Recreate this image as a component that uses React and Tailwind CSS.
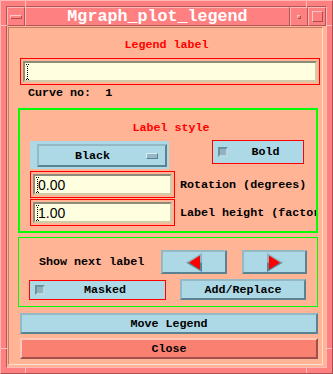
import React from 'react';

const mono = "font-['Liberation_Mono',monospace] font-bold text-[11.7px] leading-[14px]";
const blueBevel = "bg-[#add8e6] border-2 border-t-[#94b8c4] border-l-[#94b8c4] border-b-[#5b8290] border-r-[#5b8290]";

function Cursor() {
  const dots = [];
  for (let y = 2; y < 15; y += 2) dots.push(<rect key={y} x="2" y={y} width="1" height="1" />);
  return (
    <svg width="5" height="16" viewBox="0 0 5 16" className="shrink-0">
      <g fill="#000">
        <rect x="1" y="0" width="1" height="1" />
        <rect x="3" y="0" width="1" height="1" />
        {dots}
        <rect x="1" y="15" width="1" height="1" />
        <rect x="3" y="15" width="1" height="1" />
      </g>
    </svg>
  );
}

function Field({ className, value }) {
  return (
    <div className={`border border-[#ff0000] p-[2px] ${className}`}>
      <div className="h-full flex items-center bg-[#ffffe0] border-2 border-t-[#8b8b78] border-l-[#8b8b78] border-b-[#d2cbaa] border-r-[#d2cbaa]">
        <Cursor />
        <span className="-ml-[2px] font-['Liberation_Sans',sans-serif] text-[14px] leading-[16px] text-black">{value}</span>
      </div>
    </div>
  );
}

function Indicator() {
  return (
    <div className="w-[10px] h-[10px] shrink-0 bg-[#8fb3bf] border-2 border-t-[#6d929e] border-l-[#6d929e] border-b-[#b9d8e2] border-r-[#b9d8e2]" />
  );
}

function Toggle({ className, label }) {
  return (
    <div className={`flex items-center border border-[#ff0000] bg-[#add8e6] pl-[5px] ${className}`}>
      <Indicator />
      <span className={`flex-1 text-center text-black ${mono}`}>{label}</span>
    </div>
  );
}

function ArrowLeft() {
  return (
    <svg width="16" height="19" viewBox="0 0 16 19">
      <polygon points="0,9.5 16,0 16,9.5" fill="#8fb2be" />
      <polygon points="0,9.5 16,9.5 16,19" fill="#5b8290" />
      <polygon points="3,9.5 14,2.5 14,16.5" fill="#ff0000" />
    </svg>
  );
}

function ArrowRight() {
  return (
    <svg width="16" height="19" viewBox="0 0 16 19">
      <polygon points="16,9.5 0,0 0,9.5" fill="#8fb2be" />
      <polygon points="16,9.5 0,9.5 0,19" fill="#5b8290" />
      <polygon points="13,9.5 2,2.5 2,16.5" fill="#ff0000" />
    </svg>
  );
}

const titlePart = "h-full border border-t-[#ffb8b8] border-l-[#ffb8b8] border-b-[#b05858] border-r-[#b05858] flex items-center justify-center";

export default function App() {
  return (
    <div className="relative w-[333px] h-[374px] bg-[#ff8080] border border-t-[#ffb8b8] border-l-[#ffb8b8] border-b-[#a85050] border-r-[#a85050] p-[5px]">
      <div className="h-full flex flex-col border border-t-[#b05858] border-l-[#b05858] border-b-[#ffb8b8] border-r-[#ffb8b8]">
        {/* title bar */}
        <div className="h-[19px] flex shrink-0">
          <div className={`w-[18px] ${titlePart}`}>
            <div className="w-[12px] h-[4px] border border-t-[#ffc8c8] border-l-[#ffc8c8] border-b-[#a85050] border-r-[#a85050]" />
          </div>
          <div className={`flex-1 ${titlePart}`}>
            <span className="font-['Liberation_Mono',monospace] font-bold text-[16.7px] leading-[18px] text-white">Mgraph_plot_legend</span>
          </div>
          <div className={`w-[18px] ${titlePart}`}>
            <div className="w-[4px] h-[4px] border border-t-[#ffc8c8] border-l-[#ffc8c8] border-b-[#a85050] border-r-[#a85050]" />
          </div>
          <div className={`w-[18px] ${titlePart}`}>
            <div className="w-[11px] h-[11px] border border-t-[#ffc8c8] border-l-[#ffc8c8] border-b-[#a85050] border-r-[#a85050]" />
          </div>
        </div>

        {/* content */}
        <div className="flex-1 bg-[#ffb496] flex">
          <div className="flex-1 ml-[1px] mt-[1px] mr-[3px] mb-[2px] border border-t-[#c87c64] border-l-[#c87c64] border-b-[#ffe0d0] border-r-[#ffe0d0] flex flex-col">
            <div className={`mt-[10px] text-center pl-[2px] text-[#ff0000] ${mono}`}>Legend label</div>
            <Field className="mt-[6px] ml-[11px] w-[300px] h-[27px]" value="" />
            <div className={`mt-[1px] ml-[19px] whitespace-pre text-black ${mono}`}>Curve no:  1</div>

            {/* label style group */}
            <div className="mt-[8px] ml-[9px] w-[300px] h-[125px] border-2 border-[#00ff00] overflow-hidden flex flex-col">
              <div className={`mt-[11px] text-center pl-[6px] text-[#ff0000] ${mono}`}>Label style</div>
              <div className="mt-[5px] ml-[10px] flex items-start">
                <div className="mt-[1px] w-[139px] h-[28px] bg-[#add8e6] pl-[7px] pt-[3px] pr-[2px] pb-[2px]">
                  <div className={`h-full flex items-center ${blueBevel}`}>
                    <span className={`flex-1 text-center text-black ${mono}`}>Black</span>
                    <div className="mr-[7px] w-[12px] h-[6px] bg-[#94b8c4] border border-t-[#d4eef5] border-l-[#d4eef5] border-b-[#5b8290] border-r-[#5b8290]" />
                  </div>
                </div>
                <Toggle className="ml-[43px] w-[92px] h-[24px]" label="Bold" />
              </div>
              <div className="mt-[2px] ml-[10px] flex items-center">
                <Field className="w-[145px] h-[27px] shrink-0" value="0.00" />
                <span className={`ml-[5px] whitespace-nowrap text-black ${mono}`}>Rotation (degrees)</span>
              </div>
              <div className="mt-[1px] ml-[10px] flex items-center">
                <Field className="w-[145px] h-[27px] shrink-0" value="1.00" />
                <span className={`ml-[5px] whitespace-nowrap text-black ${mono}`}>Label height (factor)</span>
              </div>
            </div>

            {/* next label group */}
            <div className="mt-[4px] ml-[9px] w-[300px] h-[70px] border border-[#00ff00] flex flex-col">
              <div className="mt-[12px] flex items-center">
                <span className={`ml-[20px] w-[122px] text-black ${mono}`}>Show next label</span>
                <div className={`w-[66px] h-[24px] flex items-center justify-center ${blueBevel}`}>
                  <ArrowLeft />
                </div>
                <div className={`ml-[15px] w-[65px] h-[24px] flex items-center justify-center ${blueBevel}`}>
                  <ArrowRight />
                </div>
              </div>
              <div className="mt-[5px] flex items-start">
                <Toggle className="mt-[1px] ml-[10px] w-[137px] h-[20px]" label="Masked" />
                <div className={`ml-[14px] w-[126px] h-[21px] flex items-center justify-center ${blueBevel}`}>
                  <span className={`text-black ${mono}`}>Add/Replace</span>
                </div>
              </div>
            </div>

            <div className={`mt-[6px] ml-[11px] w-[298px] h-[21px] flex items-center justify-center ${blueBevel}`}>
              <span className={`text-black ${mono}`}>Move Legend</span>
            </div>
            <div className="mt-[4px] ml-[11px] w-[298px] h-[21px] flex items-center justify-center bg-[#fa8072] border-2 border-t-[#ffc8b8] border-l-[#ffc8b8] border-b-[#a0504a] border-r-[#a0504a]">
              <span className={`text-black ${mono}`}>Close</span>
            </div>
          </div>
        </div>
      </div>

      {/* frame corner notches */}
      <div className="absolute left-[24px] top-0 w-[1px] h-[6px] bg-[#ffc0c0]" />
      <div className="absolute left-[305px] top-0 w-[1px] h-[6px] bg-[#ffc0c0]" />
      <div className="absolute left-0 top-[24px] w-[6px] h-[1px] bg-[#ffc0c0]" />
      <div className="absolute right-0 top-[24px] w-[6px] h-[1px] bg-[#ffc0c0]" />
      <div className="absolute left-[24px] bottom-0 w-[1px] h-[6px] bg-[#ffc0c0]" />
      <div className="absolute left-[305px] bottom-0 w-[1px] h-[6px] bg-[#ffc0c0]" />
      <div className="absolute left-0 bottom-[24px] w-[6px] h-[1px] bg-[#ffc0c0]" />
      <div className="absolute right-0 bottom-[24px] w-[6px] h-[1px] bg-[#ffc0c0]" />
    </div>
  );
}
